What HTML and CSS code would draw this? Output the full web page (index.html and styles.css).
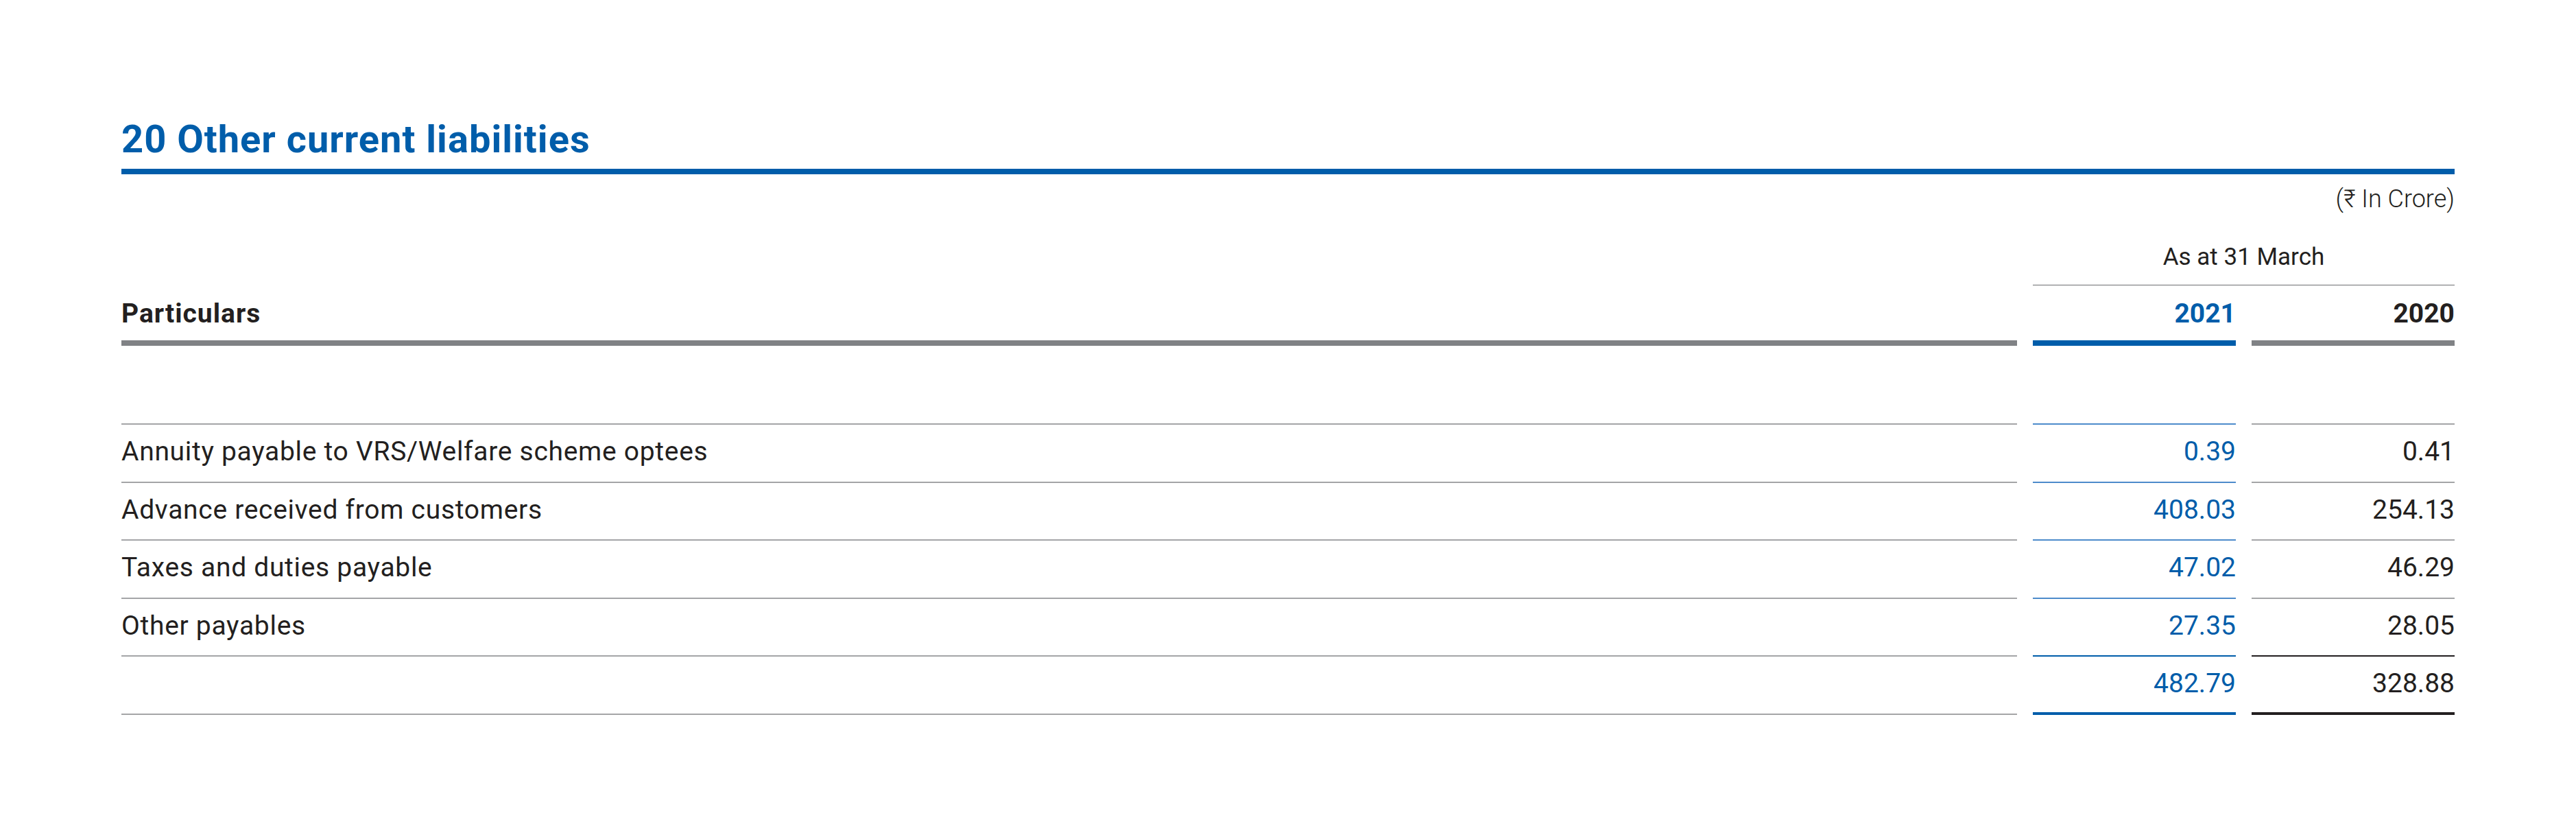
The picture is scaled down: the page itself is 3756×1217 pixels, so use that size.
FILE: index.html
```html
<!DOCTYPE html>
<html lang="en">
<head>
<meta charset="utf-8">
<title>20 Other current liabilities</title>
<link rel="stylesheet" href="styles.css">
</head>
<body>
<div class="page">
  <h1 class="title">20 Other current liabilities</h1>
  <div class="title-rule"></div>
  <div class="unit">(₹ In Crore)</div>
  <div class="table">
    <div class="cell blank"></div>
    <div class="cell asat">As at 31 March</div>

    <div class="cell head head-part part">Particulars</div>
    <div class="cell head head-cur num">2021</div>
    <div class="cell head head-prev num">2020</div>

    <div class="cell spacer part"></div>
    <div class="cell spacer cur"></div>
    <div class="cell spacer prev"></div>

    <div class="cell row part">Annuity payable to VRS/Welfare scheme optees</div>
    <div class="cell row cur num">0.39</div>
    <div class="cell row prev num">0.41</div>

    <div class="cell row part">Advance received from customers</div>
    <div class="cell row cur num">408.03</div>
    <div class="cell row prev num">254.13</div>

    <div class="cell row part">Taxes and duties payable</div>
    <div class="cell row cur num">47.02</div>
    <div class="cell row prev num">46.29</div>

    <div class="cell row part">Other payables</div>
    <div class="cell row cur num strong-cur">27.35</div>
    <div class="cell row prev num strong-prev">28.05</div>

    <div class="cell row part"></div>
    <div class="cell row cur num total-cur">482.79</div>
    <div class="cell row prev num total-prev">328.88</div>
  </div>
</div>
</body>
</html>
```

FILE: styles.css
```css
html, body {
  margin: 0;
  padding: 0;
  background: #ffffff;
}

body {
  font-family: Roboto, "Liberation Sans", "DejaVu Sans", sans-serif;
  color: #231f20;
}

.page {
  padding: 175px 177px 0 177px;
}

.title {
  margin: 0;
  font-family: Roboto, "Liberation Sans", sans-serif;
  font-weight: 700;
  font-size: 56px;
  line-height: 56px;
  letter-spacing: 1px;
  color: #005daa;
}

.title-rule {
  margin-top: 15px;
  height: 8px;
  background: #005daa;
}

.unit {
  margin-top: 18px;
  text-align: right;
  font-weight: 300;
  font-size: 36px;
  line-height: 36px;
  color: #231f20;
}

.table {
  margin-top: 49px;
  display: grid;
  grid-template-columns: 1fr 296px 296px;
  column-gap: 23px;
}

.cell {
  box-sizing: border-box;
}

.asat {
  grid-column: 2 / 4;
  text-align: center;
  font-size: 35px;
  line-height: 35px;
  padding-bottom: 23px;
  border-bottom: 1px solid #6d6e71;
}

.head {
  padding-top: 22px;
  padding-bottom: 19px;
  font-weight: 700;
  font-size: 39px;
  line-height: 39px;
  border-bottom: 8px solid #808285;
}

.head.part {
  letter-spacing: 1px;
}

.head-cur {
  color: #005daa;
  border-bottom-color: #005daa;
}

.num {
  text-align: right;
}

.spacer {
  height: 115px;
  border-bottom: 2px solid #a4a5a7;
}

.spacer.cur,
.row.cur {
  border-bottom-color: #4d8bcb;
}

.row {
  height: 84.6px;
  padding-top: 20px;
  font-size: 39px;
  line-height: 39px;
  border-bottom: 2px solid #a4a5a7;
}

.row.part {
  letter-spacing: 0.7px;
}

.row.cur {
  color: #005daa;
}

.row.strong-cur {
  border-bottom-color: #005daa;
}

.row.strong-prev {
  border-bottom-color: #231f20;
}

.row.total-cur {
  border-bottom: 4px solid #005daa;
}

.row.total-prev {
  border-bottom: 4px solid #231f20;
}
```
